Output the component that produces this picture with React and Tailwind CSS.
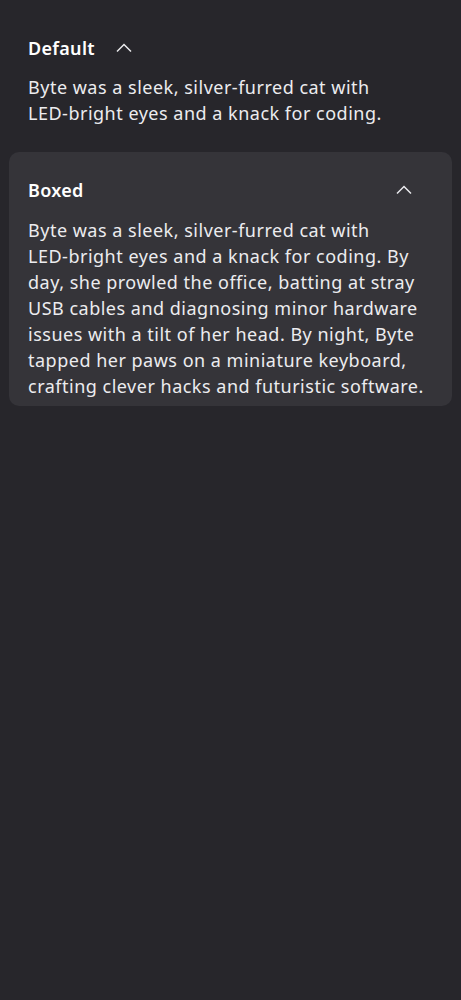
import React from 'react';

// word joiner keeps "LED-bright" together, as in the reference
const LED = 'LED-\u2060bright';

function Chevron() {
  return (
    <svg width="16" height="10" viewBox="0 0 16 10" fill="none" className="shrink-0">
      <path d="M1 8.5L8 1.5L15 8.5" stroke="#e9e9ec" strokeWidth="1.5" />
    </svg>
  );
}

export default function App() {
  return (
    <div
      className="min-h-screen bg-[#27262b] px-[9px] pt-[10px] text-[#ececef] tracking-[0.5px]"
      style={{ fontFamily: '"Noto Sans", "Open Sans", sans-serif' }}
    >
      {/* Default */}
      <div className="px-[19px] pt-[25px] pb-[8px]">
        <button className="flex items-center gap-[21px] h-[26px] tracking-[0.3px]">
          <span className="text-[18px] font-semibold leading-[26px] text-white">Default</span>
          <Chevron />
        </button>
        <p className="mt-[13px] text-[18px] leading-[26px]">
          {`Byte was a sleek, silver-furred cat with ${LED} eyes and a knack for coding.`}
        </p>
      </div>

      {/* Boxed */}
      <div className="mt-[18px] rounded-[10px] bg-[#353439] px-[19px] pt-[25px] pb-[7px]">
        <button className="flex w-full items-center justify-between pr-[21px] h-[26px] tracking-[0.3px]">
          <span className="text-[18px] font-semibold leading-[26px] text-white">Boxed</span>
          <Chevron />
        </button>
        <p className="mt-[14px] text-[18px] leading-[26px]">
          {`Byte was a sleek, silver-furred cat with ${LED} eyes and a knack for coding. By day, she prowled the office, batting at stray USB cables and diagnosing minor hardware issues with a tilt of her head. By night, Byte tapped her paws on a miniature keyboard, crafting clever hacks and futuristic software.`}
        </p>
      </div>
    </div>
  );
}
